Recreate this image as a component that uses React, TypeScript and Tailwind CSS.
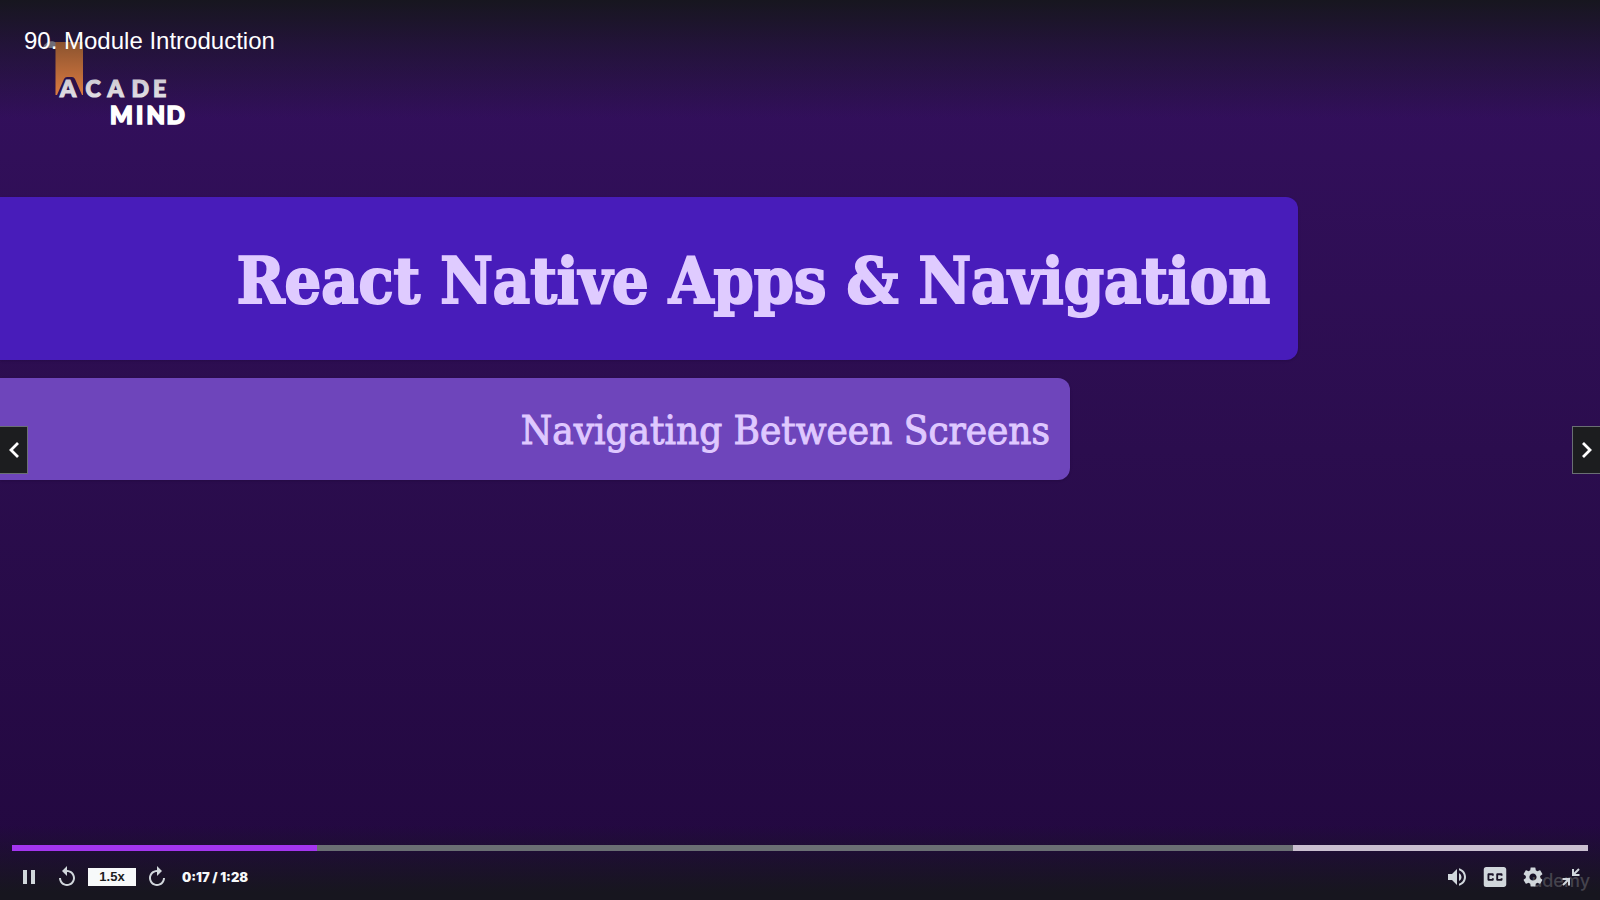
import type { ReactNode } from "react";
import { MdClosedCaption, MdPause, MdReplay, MdSettings, MdVolumeUp } from "react-icons/md";

const PLAYED = 19.35;
const BUFFERED = 81.3;

function ControlButton({ label, children }: { label: string; children: ReactNode }) {
  return (
    <button
      type="button"
      aria-label={label}
      className="flex h-10 w-[38px] items-center justify-center text-[#d1d7dc] hover:text-white"
    >
      {children}
    </button>
  );
}

function AcademindLogo() {
  return (
    <svg
      className="block h-[100px] w-[160px]"
      viewBox="0 0 160 100"
      role="img"
      aria-label="Academind"
      fontFamily="Lato, 'Liberation Sans', sans-serif"
      fontWeight="900"
    >
      <defs>
        <linearGradient id="ribbon" x1="0" y1="0" x2="0" y2="1">
          <stop offset="0" stopColor="#8a532f" />
          <stop offset="1" stopColor="#db7a40" />
        </linearGradient>
        <linearGradient id="acade" x1="0" y1="0" x2="0" y2="1">
          <stop offset="0" stopColor="#c9c5ce" />
          <stop offset="1" stopColor="#e6e4e8" />
        </linearGradient>
      </defs>
      <path d="M13 13C16 7 22 6 27 9V14H20Z" fill="#6f6d78" />
      <path d="M25.5 8H53V61H52L45 45Q44 43 42 43H37Q35 43 34 45L27 61H25.5Z" fill="url(#ribbon)" />
      <text
        y="63"
        fontSize="23"
        fill="url(#acade)"
        stroke="url(#acade)"
        strokeWidth="1.2"
        x="30 55.5 77.5 101.5 123"
      >
        ACADE
      </text>
      <text y="90" fontSize="24" fill="#ffffff" stroke="#ffffff" strokeWidth="1.6" x="80 106 116.5 136.5">
        MIND
      </text>
    </svg>
  );
}

export default function App() {
  return (
    <main className="relative isolate flex min-h-screen flex-col overflow-hidden bg-linear-to-b from-[#34105f] via-[#2b0d4e] to-[#22083f] font-['Liberation_Sans',Arial,sans-serif]">
      <header className="relative h-[197px] bg-linear-to-b from-[#17161f] via-[#17161f]/55 via-25% to-transparent to-60%">
        <div className="absolute top-[34px] left-[30px]">
          <AcademindLogo />
        </div>
        <h1 className="relative px-6 pt-[25px] text-2xl leading-8 text-white">90. Module Introduction</h1>
      </header>

      <section className="flex flex-col items-start gap-[18px] font-['DejaVu_Serif_Condensed','DejaVu_Serif',serif]">
        <div className="flex h-[163px] w-[81.125%] items-center justify-end rounded-r-xl bg-[#481cba] pt-1 pr-7 shadow-sm">
          <h2 className="text-[64px] leading-none font-bold whitespace-nowrap text-[#dfcbff] [-webkit-text-stroke:2px_#dfcbff]">
            React Native Apps &amp; Navigation
          </h2>
        </div>
        <div className="flex h-[102px] w-[66.875%] items-center justify-end rounded-r-xl bg-[#6e45bb] pt-0.5 pr-5 shadow-sm">
          <p className="text-[40px] leading-none whitespace-nowrap text-[#dfc8ff] [-webkit-text-stroke:1px_#dfc8ff]">
            Navigating Between Screens
          </p>
        </div>
      </section>

      <button
        type="button"
        aria-label="Previous lecture"
        className="absolute top-1/2 left-0 flex h-12 w-7 -translate-y-1/2 items-center justify-center border border-l-0 border-[#6a6f73] bg-[#1c1d1f] text-white"
      >
        <svg className="h-4 w-2.5" viewBox="0 0 10 16" fill="none" stroke="currentColor" strokeWidth="2.8">
          <path d="M9 1L2 8l7 7" />
        </svg>
      </button>
      <button
        type="button"
        aria-label="Next lecture"
        className="absolute top-1/2 right-0 flex h-12 w-7 -translate-y-1/2 items-center justify-center border border-r-0 border-[#6a6f73] bg-[#1c1d1f] text-white"
      >
        <svg className="h-4 w-2.5" viewBox="0 0 10 16" fill="none" stroke="currentColor" strokeWidth="2.8">
          <path d="M1 1l7 7-7 7" />
        </svg>
      </button>

      <footer className="relative mt-auto bg-linear-to-b from-transparent to-[#17161f] to-90% pt-5">
        <div
          role="progressbar"
          aria-label="Playback progress"
          aria-valuenow={17}
          aria-valuemin={0}
          aria-valuemax={88}
          className="mx-3 flex h-1.5 bg-[#cabfd0]"
        >
          <div className="bg-[#a435f0]" style={{ width: `${PLAYED}%` }} />
          <div className="bg-[#6a6f73]" style={{ width: `${BUFFERED - PLAYED}%` }} />
        </div>
        <div className="flex items-center justify-between px-2.5 pt-1.5 pb-[3px]">
          <div className="flex items-center">
            <ControlButton label="Pause">
              <MdPause size={24} />
            </ControlButton>
            <ControlButton label="Rewind 5 seconds">
              <MdReplay size={24} />
            </ControlButton>
            <button
              type="button"
              aria-label="Playback rate"
              className="mx-0.5 h-[18px] w-12 bg-[#f7f9fa] text-[13px] leading-[18px] font-bold text-[#1c1d1f]"
            >
              1.5x
            </button>
            <ControlButton label="Forward 5 seconds">
              <MdReplay size={24} className="-scale-x-100" />
            </ControlButton>
            <span className="ml-1.5 font-['Inter','Liberation_Sans',sans-serif] text-[13px] leading-5 font-black text-[#f7f9fa]">
              0:17 / 1:28
            </span>
          </div>
          <div className="relative flex items-center">
            <span className="absolute right-0 bottom-1 font-['Inter','Liberation_Sans',sans-serif] text-lg leading-6 font-medium text-[#45434d]">
              ùdemy
            </span>
            <div className="relative flex">
              <ControlButton label="Volume">
                <MdVolumeUp size={24} />
              </ControlButton>
              <ControlButton label="Captions">
                <MdClosedCaption size={30} />
              </ControlButton>
              <ControlButton label="Settings">
                <MdSettings size={24} />
              </ControlButton>
              <ControlButton label="Exit fullscreen">
                <svg className="size-[18px]" viewBox="0 0 18 18" fill="none" stroke="currentColor" strokeWidth="2">
                  <path d="M17 1L11 7M11 1V7H17.5M1 17L7 11M0.5 11H7V17.5" />
                </svg>
              </ControlButton>
            </div>
          </div>
        </div>
      </footer>
    </main>
  );
}
